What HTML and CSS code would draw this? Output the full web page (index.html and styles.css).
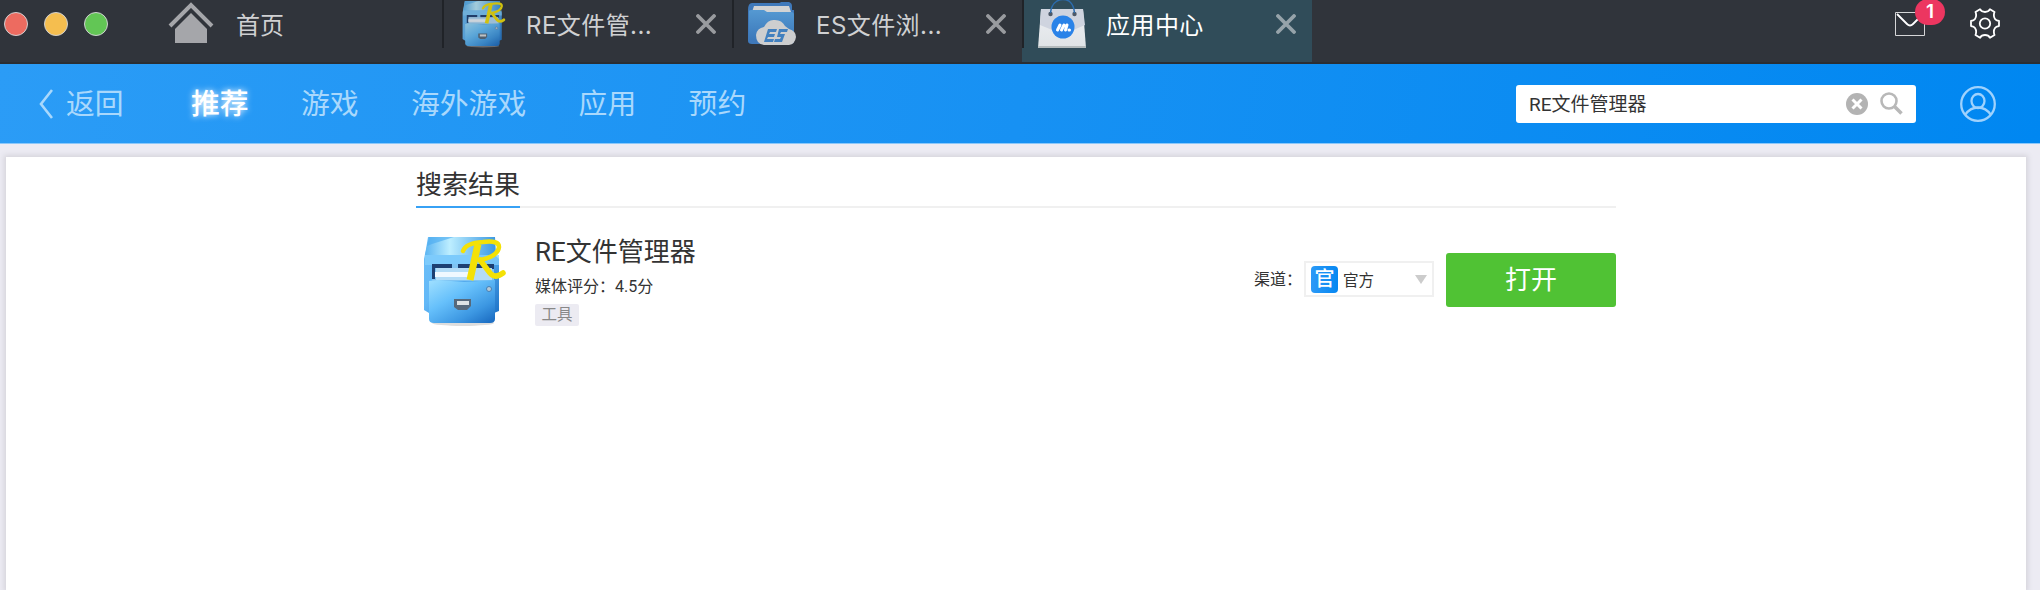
FILE: index.html
```html
<!DOCTYPE html>
<html lang="zh-CN">
<head>
<meta charset="utf-8">
<title>应用中心</title>
<link rel="stylesheet" href="styles.css">
</head>
<body>
<svg width="0" height="0" class="defs">
  <defs>
    <linearGradient id="body" x1="0" y1="0" x2="1" y2="1">
      <stop offset="0" stop-color="#6fc0f8"/><stop offset=".45" stop-color="#62b8f7"/><stop offset="1" stop-color="#1f74c8"/>
    </linearGradient>
    <linearGradient id="front" x1="0" y1="0" x2=".9" y2="1">
      <stop offset="0" stop-color="#a0e0ff"/><stop offset=".4" stop-color="#66c0fb"/><stop offset=".75" stop-color="#3c97e2"/><stop offset="1" stop-color="#1d6fc4"/>
    </linearGradient>
    <linearGradient id="lid" x1="0" y1="0" x2="1" y2="0">
      <stop offset="0" stop-color="#5cb5f2"/><stop offset=".35" stop-color="#bdeeff"/><stop offset="1" stop-color="#3a98e2"/>
    </linearGradient>
    <linearGradient id="folder" x1="0" y1="0" x2="0" y2="1">
      <stop offset="0" stop-color="#5599d2"/><stop offset="1" stop-color="#3b78ba"/>
    </linearGradient>
    <linearGradient id="bag" x1="0" y1="0" x2="0" y2="1">
      <stop offset="0" stop-color="#eef0f4"/><stop offset="1" stop-color="#dfe3e6"/>
    </linearGradient>
    <symbol id="cabinet" viewBox="0 0 82 90">
      <ellipse cx="39" cy="86" rx="31" ry="3" fill="#bbb" opacity=".5"/>
      <path d="M4 0H71V18L75 22V74L70 76H5L0 73V22L2 12Z" fill="url(#body)"/>
      <path d="M5 0H71L72 18H1Z" fill="url(#lid)"/>
      <path d="M5 0H30L8 7L3 9Z" fill="#4aaaf0" opacity=".6"/>
      <path d="M1 18H75V28H1Z" fill="#84d0fd" opacity=".75"/>
      <path d="M8 27H70V44H8Z" fill="#7fc3f2"/>
      <path d="M8 27H28V31H11V42H8ZM34 27H70V32H34Z" fill="#1d3f72"/>
      <path d="M12 31H68V43H12Z" fill="#b4dcf7"/>
      <path d="M11 35H50V40H11Z" fill="#f0f8ff"/>
      <path d="M5 44L14 43L40 45L71 43V82Q71 86 66 86H10Q5 86 5 82Z" fill="url(#front)"/>
      <path d="M30 62H47V69L43 73H34L30 70Z" fill="#56697b"/>
      <path d="M33 64H45V68H33Z" fill="#dce2e4"/>
      <circle cx="65" cy="52" r="2.500" fill="#b6c9d6" stroke="#4580b5"/>
      <path d="M39 14Q42 6 59 5Q75 3 75 10Q74 19 57 23" fill="none" stroke="#f4e106" stroke-width="4.500" stroke-linecap="round"/>
      <path d="M54 7L46 43" stroke="#f4e106" stroke-width="7"/>
      <path d="M56 23L66 36Q71 42 79 36" fill="none" stroke="#f4e106" stroke-width="5.500" stroke-linecap="round"/>
    </symbol>
    <symbol id="close" viewBox="0 0 20 20">
      <path d="M2 2L18 18M18 2L2 18" stroke="currentColor" stroke-width="3.800" stroke-linecap="round"/>
    </symbol>
  </defs>
</svg>

<header class="titlebar">
  <div class="lights"><i class="red"></i><i class="yellow"></i><i class="green"></i></div>
  <div class="home">
    <svg width="46" height="42" viewBox="0 0 46 42"><path d="M23 11L39 27V41H7V27Z" fill="#a5a6aa"/><path d="M2 24L23 3L44 24" fill="none" stroke="#a5a6aa" stroke-width="4"/></svg>
    <span>首页</span>
  </div>
  <div class="tab">
    <svg class="tab-icon dim" width="44" height="47"><use href="#cabinet"/></svg>
    <span class="label">RE文件管...</span>
    <svg class="close" width="20" height="20"><use href="#close"/></svg>
  </div>
  <div class="tab">
    <svg class="tab-icon" width="48" height="48" viewBox="0 0 48 48">
      <path d="M4 3H28L31 3Q32 3 33 2H41Q44 3 44 6V10H46V41Q46 44 42 44H4Q0 44 0 41V10Q0 3 4 3Z" fill="#3f79bb"/>
      <path d="M6 6H41L43 12H4Z" fill="#d2d3d4"/>
      <path d="M1 11Q1 10 4 10H16L19 12H43Q46 12 46 15V40H1Z" fill="url(#folder)"/>
      <path d="M16 45Q8 44 8 35Q9 28 16 27Q20 19 27 20Q34 20 37 26L41 29Q48 31 48 37Q47 44 41 45Z" fill="#cdcecf"/>
      <path d="M20 29H29L28 32H22L21 34H27L26 37H20L19 39H26L25 42H16ZM31 29H40L39 32H33L32 34H37L34 42H26L27 39H32L33 37H29Z" fill="#4180bf"/>
    </svg>
    <span class="label">ES文件浏...</span>
    <svg class="close" width="20" height="20"><use href="#close"/></svg>
  </div>
  <div class="tab active">
    <svg class="tab-icon" width="48" height="48" viewBox="0 0 48 48">
      <path d="M3 9H45L48 48H0Z" fill="url(#bag)"/>
      <path d="M3 9H45L47 25Q36 29 25 36Q14 29 2 25Z" fill="#cfd4df"/>
      <path d="M0 46H48V48H0Z" fill="#b4bbbd"/>
      <circle cx="12.500" cy="14" r="2.200" fill="#4e5967"/><circle cx="36.500" cy="14" r="2.200" fill="#4e5967"/>
      <path d="M12.500 13Q13 5 19 1Q25 -2 31 1Q36 5 36.500 13" fill="none" stroke="#2c6cae" stroke-width="1.500"/>
      <circle cx="25" cy="27" r="11.500" fill="#2a83e8"/>
      <path d="M19.500 30L22 25M23.500 30L26 25M27.500 30L29 25M31 30H31.500" fill="none" stroke="#fff" stroke-width="3" stroke-linecap="round"/>
    </svg>
    <span class="label">应用中心</span>
    <svg class="close" width="20" height="20"><use href="#close"/></svg>
  </div>
  <div class="tools">
    <div class="mail">
      <svg width="30" height="24" viewBox="0 0 30 24"><path d="M.5 .5H29.500V23.500H.5Z" fill="none" stroke="#d5d6d8"/><path d="M2 2L12 12Q15 15 18 12L28 2" fill="none" stroke="#fff" stroke-width="1.800"/></svg>
      <span class="badge">1</span>
    </div>
    <svg width="30" height="31" viewBox="0 0 30 31" fill="none" stroke="#fff" stroke-width="1.800">
      <path d="M10 1.200Q11.500 4 15 4T20 1.200L24.500 4Q23 8 25 11Q26 12.500 29 13V18Q26 18.500 25 20Q23 23 24.500 27L20 29.800Q18.500 27 15 27T10 29.800L5.500 27Q7 23 5 20Q4 18.500 1 18V13Q4 12.500 5 11Q7 8 5.500 4Z" stroke-linejoin="round"/><circle cx="15" cy="15.500" r="5.200"/>
    </svg>
  </div>
</header>

<nav class="navbar">
  <a class="back"><svg width="14" height="30" viewBox="0 0 14 30"><path d="M13 1L2 15L13 29" fill="none" stroke="#a9d8fc" stroke-width="2.600"/></svg><span>返回</span></a>
  <div class="links"><a class="current">推荐</a><a>游戏</a><a>海外游戏</a><a>应用</a><a>预约</a></div>
  <div class="search">
    <span>RE文件管理器</span>
    <svg width="22" height="22" viewBox="0 0 22 22"><circle cx="11" cy="11" r="11" fill="#b3b3b3"/><path d="M6.500 6.500L15.500 15.500M15.500 6.500L6.500 15.500" stroke="#fff" stroke-width="3"/></svg>
    <svg class="lens" width="23" height="23" viewBox="0 0 23 23" fill="none" stroke="#b8b8b8"><circle cx="9" cy="9" r="7.500" stroke-width="2.600"/><path d="M14.500 14.500L21.500 21.500" stroke-width="3.600"/></svg>
  </div>
  <svg class="user" width="36" height="36" viewBox="0 0 36 36" fill="none" stroke="#9fd2fd" stroke-width="2.300"><circle cx="18" cy="18" r="16.800"/><ellipse cx="18" cy="15" rx="6.500" ry="7"/><path d="M5 29Q10 21.500 18 21.500T31 29"/></svg>
</nav>

<main class="stage">
  <section class="panel">
    <div class="results">
      <h1><span>搜索结果</span></h1>
      <article class="app">
        <svg class="app-icon" width="82" height="90"><use href="#cabinet"/></svg>
        <div class="info">
          <h2>RE文件管理器</h2>
          <p>媒体评分：4.5分</p>
          <span class="tag">工具</span>
        </div>
        <span class="channel">渠道：</span>
        <div class="select"><b>官</b><span>官方</span><i></i></div>
        <button class="open">打开</button>
      </article>
    </div>
  </section>
</main>
</body>
</html>
```
FILE: styles.css
```css
* { box-sizing: border-box; }
body {
  margin: 0;
  width: 2040px;
  height: 590px;
  overflow: hidden;
  display: flex;
  flex-direction: column;
  font-family: Roboto, "Noto Sans CJK SC", sans-serif;
  background: #ecebf3;
}
svg { display: block; flex: none; }
.defs { position: absolute; }

.titlebar {
  flex: none;
  height: 64px;
  display: flex;
  background: #30343b;
  border-bottom: 2px solid #2a2e33;
  color: #cfd0d2;
  font-family: Inter, "Noto Sans CJK SC", sans-serif;
  font-size: 24px;
  line-height: 51px;
}
.lights { display: flex; gap: 16px; padding: 12px 0 0 4px; width: 168px; }
.lights i { width: 24px; height: 24px; border-radius: 50%; border: 1px solid; }
.red { background: #ed6b60; border-color: #d8574c; }
.yellow { background: #f5be4f; border-color: #dca53b; }
.green { background: #62c655; border-color: #4fae41; }
.home { display: flex; gap: 22px; width: 274px; }
.home svg { margin-top: 2px; }

.tab {
  width: 290px;
  height: 62px;
  display: flex;
  padding-left: 16px;
  background: linear-gradient(#202328, #202328) 0 0 / 2px 48px no-repeat;
}
.tab-icon { margin-right: 20px; }
.tab-icon.dim { margin: 1px 20px 0 4px; opacity: .82; }
.label { width: 170px; white-space: nowrap; letter-spacing: .45px; }
.close { margin-top: 14px; color: #999b9f; }
.tab.active { background-color: #304c59; color: #fff; }
.tab.active .close { color: #96a3aa; }

.tools { display: flex; margin-left: auto; padding-right: 40px; gap: 45px; }
.tools > svg { margin-top: 8px; }
.mail { position: relative; padding-top: 12px; }
.badge {
  position: absolute;
  left: 20px;
  top: -1px;
  width: 30px;
  height: 26px;
  border-radius: 13px;
  background: #ec3660;
  color: #fff;
  font: 600 19px/25px Inter, sans-serif;
  text-align: center;
}

.navbar {
  flex: none;
  height: 80px;
  display: flex;
  align-items: center;
  padding: 0 44px 0 39px;
  background: linear-gradient(100deg, #2b9cf6, #1791f3 50%, #0087f1);
  border-bottom: 1px solid #8cc8fa;
  font-size: 28.8px;
  color: #a9d8fc;
}
.back { display: flex; align-items: center; gap: 13px; width: 152px; }
.back span, .links { padding-bottom: 4px; }
.links { display: flex; gap: 52.4px; }
.current { color: #fff; font-weight: 500; text-shadow: 0 0 6px #fff; }
.search {
  margin-left: auto;
  width: 400px;
  height: 38px;
  display: flex;
  align-items: center;
  padding: 0 13px;
  background: #fff;
  border-radius: 3px;
  color: #333;
  font-size: 19px;
}
.search span { flex: 1; padding-bottom: 2px; }
.lens { margin-left: 12px; }
.user { margin-left: 44px; }

.stage { flex: 1; padding: 13px 14px 0 6px; display: flex; }
.panel { flex: 1; background: #fff; box-shadow: 0 0 5px 2px #d5d4db; }
.results { width: 1200px; margin-left: 410px; color: #333; }
h1, h2, p { margin: 0; font-weight: 400; }
h1 {
  height: 51px;
  border-bottom: 2px solid #f0f0f0;
  font-size: 26px;
  line-height: 56px;
}
h1 span { display: block; width: 104px; height: 51px; border-bottom: 2px solid #37a1f5; white-space: nowrap; }
.app { display: flex; padding-top: 29px; }
.app-icon { margin-left: 8px; }
.info { margin: -4px 0 0 29px; width: 719px; }
h2 { font-size: 26px; line-height: 38px; }
p { margin-top: 4px; font-size: 16px; line-height: 24px; white-space: nowrap; }
.tag {
  display: block;
  width: 44px;
  height: 22px;
  margin-top: 5px;
  border-radius: 2px;
  background: #ecebf2;
  color: #888;
  font-size: 15.5px;
  line-height: 22px;
  text-align: center;
}
.channel { width: 50px; padding-top: 31px; font-size: 16px; line-height: 24px; white-space: nowrap; }
.select {
  width: 130px;
  height: 36px;
  margin-top: 24px;
  border: 2px solid #f0f0f0;
  display: flex;
  align-items: center;
  padding: 0 5px;
  font-size: 15.5px;
}
.select span { padding-bottom: 1px; }
.select b {
  width: 27px;
  height: 27px;
  margin-right: 5px;
  border-radius: 4px;
  background: linear-gradient(90deg, #2b9af7, #0687f2);
  color: #fff;
  font-weight: 500;
  font-size: 20px;
  line-height: 27px;
  text-align: center;
}
.select i { margin-left: auto; border: 6.5px solid transparent; border-top: 9px solid #ccc; border-bottom: 0; }
.open {
  width: 170px;
  height: 54px;
  margin: 16px 0 0 12px;
  padding: 0;
  border: 0;
  border-radius: 3px;
  background: #50c234;
  color: #fff;
  font: 26px/54px Roboto, "Noto Sans CJK SC", sans-serif;
}
```
